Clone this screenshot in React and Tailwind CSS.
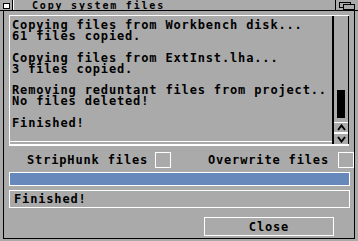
export default function App() {
  const lines = [
    'Copying files from Workbench disk...',
    '61 files copied.',
    '',
    'Copying files from ExtInst.lha...',
    '3 files copied.',
    '',
    'Removing reduntant files from project..',
    'No files deleted!',
    '',
    'Finished!',
  ];

  return (
    <div className="w-[358px] h-[241px] bg-[#aaaaaa] overflow-hidden text-black font-bold font-['DejaVu_Sans_Mono',monospace] text-[12px] tracking-[0.85px]">
      {/* title bar */}
      <div className="h-[11px] border-b border-black flex">
        <div className="w-[12px] pt-[3px] pl-[3px]">
          <div className="w-[7px] h-[6px] border border-black bg-white" />
        </div>
        <div className="w-[1px] bg-black" />
        <div className="w-[1px] bg-white" />
        <div className="flex-1 pl-[18px] pt-[1px] text-[10px] tracking-[1.8px] leading-[9px] whitespace-pre">Copy system files</div>
        <div className="w-[1px] bg-black" />
        <div className="w-[22px] pl-[3px] pt-[2px]">
          <svg width="17" height="8" viewBox="0 0 17 8">
            <rect x="0.5" y="0.5" width="11" height="5" fill="#aaaaaa" stroke="#000" />
            <rect x="4.5" y="2.5" width="11" height="5" fill="#aaaaaa" stroke="#000" />
          </svg>
        </div>
      </div>

      {/* window body */}
      <div className="ml-[3px] w-[352px] h-[228px] border-l border-r border-b border-black pl-[5px] pt-[4px]">
        {/* listview */}
        <div className="w-[340px] h-[131px] flex border-t border-l border-white border-b-2 border-black">
          <div className="flex-1 flex flex-col border-r-2 border-black">
            <div className="flex-1 pl-[2px] pt-[4px] leading-[10.9px] whitespace-pre">
              {lines.map((l, i) => (
                <div key={i} className="h-[10.9px]">{l}</div>
              ))}
            </div>
            <div className="h-[3px] border-t border-white" />
          </div>
          <div className="w-[15px] border-r border-black flex flex-col">
            <div className="flex-1 pl-[3px] pt-[74px]">
              <div className="w-[8px] h-[28px] bg-black" />
            </div>
            <div className="h-[11px] border-t border-white border-b border-black flex items-center justify-center">
              <svg width="9" height="7" viewBox="0 0 9 7"><path d="M1 6 L4.5 1.5 L8 6" fill="none" stroke="#000" strokeWidth="2" /></svg>
            </div>
            <div className="h-[11px] border-t border-white flex items-center justify-center">
              <svg width="9" height="7" viewBox="0 0 9 7"><path d="M1 1 L4.5 5.5 L8 1" fill="none" stroke="#000" strokeWidth="2" /></svg>
            </div>
          </div>
        </div>

        {/* checkbox row */}
        <div className="mt-[6px] h-[16px] flex items-center">
          <div className="pl-[18px] w-[146px] whitespace-pre">StripHunk files</div>
          <div className="w-[16px] h-[16px] border-t border-l border-white border-r border-b border-black" />
          <div className="flex-1 text-right pr-[9px] whitespace-pre">Overwrite files</div>
          <div className="w-[16px] h-[16px] border-t border-l border-white border-r border-b border-black" />
        </div>

        {/* progress */}
        <div className="mt-[4px] w-[341px] h-[14px] border-t border-l border-black border-r border-b border-white bg-[#6688bb]" />

        {/* status */}
        <div className="mt-[4px] w-[341px] h-[18px] border-t border-l border-black border-r border-b border-white pl-[4px] leading-[16px] whitespace-pre">Finished!</div>

        {/* close */}
        <div className="mt-[9px] flex">
          <div className="ml-[195px] w-[130px] h-[19px] border-t border-l border-white border-r border-b border-black flex items-center justify-center">Close</div>
        </div>
      </div>
    </div>
  );
}
